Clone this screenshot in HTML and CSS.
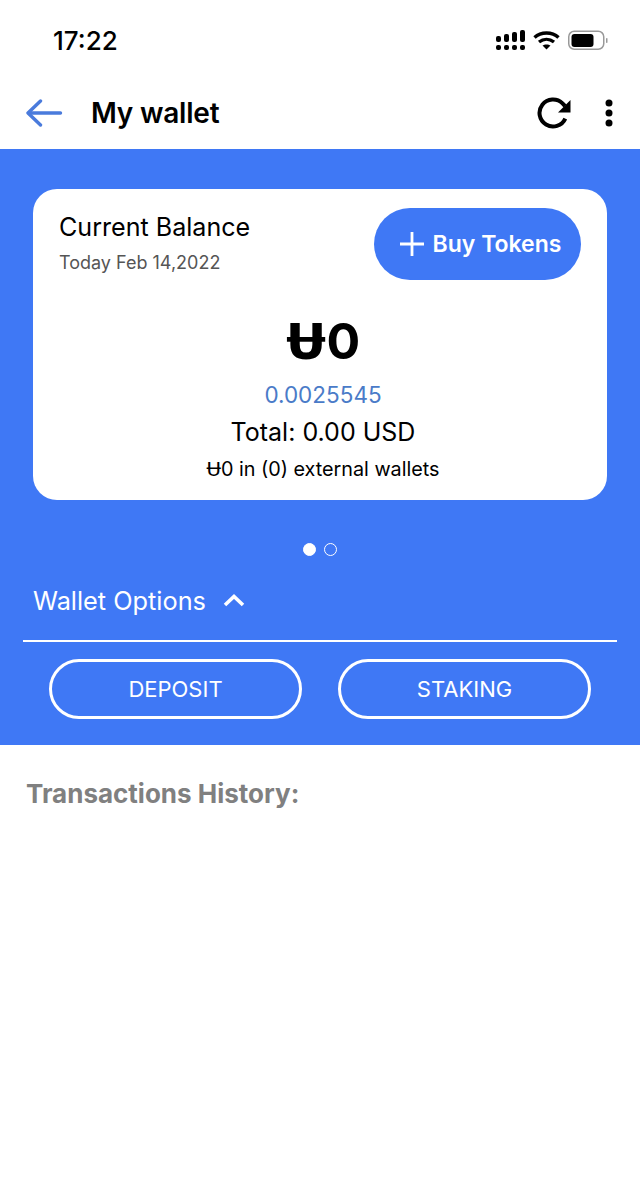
FILE: index.html
```html
<!DOCTYPE html>
<html lang="en">
<head>
<meta charset="UTF-8">
<meta name="viewport" content="width=device-width, initial-scale=1.0">
<title>My wallet</title>
<link rel="stylesheet" href="styles.css">
</head>
<body>

<div class="status-bar">
  <span class="time">17:22</span>
  <div class="status-icons">
    <svg width="29" height="20" viewBox="0 0 29 20" fill="#000">
      <rect x="0" y="6" width="5" height="6" rx="2"/>
      <rect x="8" y="4" width="5" height="8" rx="2"/>
      <rect x="16" y="2" width="5" height="10" rx="2"/>
      <rect x="24" y="0" width="5" height="12" rx="2"/>
      <rect x="0" y="15" width="5" height="5" rx="2"/>
      <rect x="8" y="15" width="5" height="5" rx="2"/>
      <rect x="16" y="15" width="5" height="5" rx="2"/>
      <rect x="24" y="15" width="5" height="5" rx="2"/>
    </svg>
    <svg width="27" height="20" viewBox="0 0 27 20" fill="none" stroke="#000" stroke-width="3.400">
      <path d="M1.500 7.500C8 1.500 19 1.500 25.500 7.500"/>
      <path d="M6 12C10.500 8.500 16.500 8.500 21 12"/>
      <path d="M13.500 19.500L9.500 15.500C11.500 14 15.500 14 17.500 15.500Z" fill="#000" stroke="none"/>
    </svg>
    <svg width="42" height="20" viewBox="0 0 42 20">
      <rect x="0.750" y="1.250" width="35" height="18" rx="5.500" fill="#fff" stroke="#999" stroke-width="1.500"/>
      <rect x="3.500" y="4" width="22" height="13" rx="3" fill="#000"/>
      <rect x="38" y="8" width="1.500" height="5" rx="0.750" fill="#999"/>
    </svg>
  </div>
</div>

<header class="app-bar">
  <svg class="back" width="38" height="30" viewBox="0 0 38 30" fill="none" stroke="#4a7bdc" stroke-width="3.400" stroke-linecap="round" stroke-linejoin="round">
    <path d="M34.500 15H3"/>
    <path d="M14.500 3L2 15L14.500 27"/>
  </svg>
  <h1 class="title">My wallet</h1>
  <svg class="refresh" width="34" height="34" viewBox="0 0 34 34" fill="none">
    <path d="M28.300 22.600A13.500 13.500 0 1 1 25.500 7.400L28 10" stroke="#000" stroke-width="4"/>
    <path d="M33.500 4V16.500H21Z" fill="#000"/>
  </svg>
  <svg class="more" width="10" height="30" viewBox="0 0 10 30" fill="#000">
    <circle cx="5" cy="5" r="3.500"/>
    <circle cx="5" cy="15" r="3.500"/>
    <circle cx="5" cy="25" r="3.500"/>
  </svg>
</header>

<section class="wallet">
  <div class="card">
    <div class="card-top">
      <div>
        <div class="card-title">Current Balance</div>
        <div class="card-date">Today Feb 14,2022</div>
      </div>
      <button class="buy-btn">
        <svg width="24" height="24" viewBox="0 0 24 24" stroke="#fff" stroke-width="2.800"><path d="M12 0V24M0 12H24"/></svg>
        Buy Tokens
      </button>
    </div>
    <div class="card-body">
      <div class="balance"><span class="currency">Ʉ</span>0</div>
      <div class="rate">0.0025545</div>
      <div class="total">Total: 0.00 USD</div>
      <div class="external"><span class="currency">Ʉ</span>0 in (0) external wallets</div>
    </div>
  </div>

  <div class="dots">
    <span class="dot active"></span>
    <span class="dot"></span>
  </div>

  <div class="options">
    <span>Wallet Options</span>
    <svg width="22" height="14" viewBox="0 0 22 14" fill="none" stroke="#fff" stroke-width="3.600"><path d="M2 12L11 3.500L20 12"/></svg>
  </div>

  <div class="actions">
    <button class="outline-btn">DEPOSIT</button>
    <button class="outline-btn">STAKING</button>
  </div>
</section>

<section class="history">
  <h2 class="history-title">Transactions History:</h2>
</section>

</body>
</html>
```

FILE: styles.css
```css
* {
  box-sizing: border-box;
}
html,
body {
  height: 100%;
}
body {
  margin: 0;
  font-family: Inter, "Noto Sans", sans-serif;
  background-color: #fff;
  color: #000;
  overflow: hidden;
}
.status-bar {
  height: 78px;
  padding: 25px 30px 0 53px;
  display: flex;
  justify-content: space-between;
  align-items: flex-start;
}
.time {
  font-size: 26px;
  line-height: 31px;
  font-weight: 500;
}
.status-icons {
  display: flex;
  gap: 8px;
  padding-top: 5px;
}
.app-bar {
  height: 71px;
  padding: 0 26px 2px;
  display: flex;
  align-items: center;
}
.back {
  flex: none;
}
.title {
  margin: 0 0 0 27px;
  flex: 1;
  font-size: 28px;
  font-weight: 600;
  letter-spacing: -0.2px;
}
.refresh {
  margin-right: 33px;
}
.wallet {
  height: 596px;
  padding: 40px 23px 0;
  background-color: #3f78f5;
  color: #fff;
}
.card {
  margin: 0 10px;
  height: 311px;
  padding: 19px 26px 0;
  background-color: #fff;
  border-radius: 24px;
  color: #000;
}
.card-top {
  display: flex;
  justify-content: space-between;
}
.card-title {
  margin-top: 3px;
  font-size: 25.100px;
  line-height: 32px;
}
.card-date {
  margin-top: 9px;
  font-size: 18px;
  line-height: 22px;
  color: #555;
}
.buy-btn {
  width: 207px;
  height: 72px;
  padding: 0 0 0 6px;
  display: flex;
  align-items: center;
  justify-content: center;
  gap: 9px;
  border: none;
  border-radius: 36px;
  background-color: #3f78f5;
  color: #fff;
  font-family: inherit;
  font-size: 23px;
  font-weight: 600;
}
.card-body {
  padding-left: 6px;
  text-align: center;
}
.currency {
  font-family: "DejaVu Sans", sans-serif;
}
.balance {
  margin-top: 30px;
  font-size: 50px;
  line-height: 62px;
  font-weight: 700;
}
.rate {
  margin-top: 8px;
  font-size: 22.500px;
  line-height: 28px;
  color: #4a7bc8;
}
.total {
  margin-top: 8px;
  font-size: 25px;
  line-height: 30px;
}
.external {
  margin-top: 10px;
  font-size: 19.800px;
  line-height: 24px;
}
.dots {
  margin-top: 43px;
  display: flex;
  justify-content: center;
  gap: 8px;
}
.dot {
  width: 13px;
  height: 13px;
  border: 1.500px solid #fff;
  border-radius: 50%;
}
.dot.active {
  background-color: #fff;
}
.options {
  margin-top: 15px;
  height: 71px;
  padding: 14px 0 0 10px;
  display: flex;
  align-items: flex-start;
  gap: 17px;
  border-bottom: 2px solid #fff;
  font-size: 25.300px;
  line-height: 32px;
}
.options svg {
  margin-top: 8px;
}
.actions {
  margin-top: 17px;
  padding: 0 3px 0 26px;
  display: flex;
  gap: 36px;
}
.outline-btn {
  width: 253px;
  height: 60px;
  border: 3px solid #fff;
  border-radius: 30px;
  background: none;
  color: #fff;
  font-family: inherit;
  font-size: 22px;
}
.history {
  padding: 33px 26px;
}
.history-title {
  margin: 0;
  font-size: 26px;
  line-height: 32px;
  font-weight: 700;
  color: #808080;
}
```
